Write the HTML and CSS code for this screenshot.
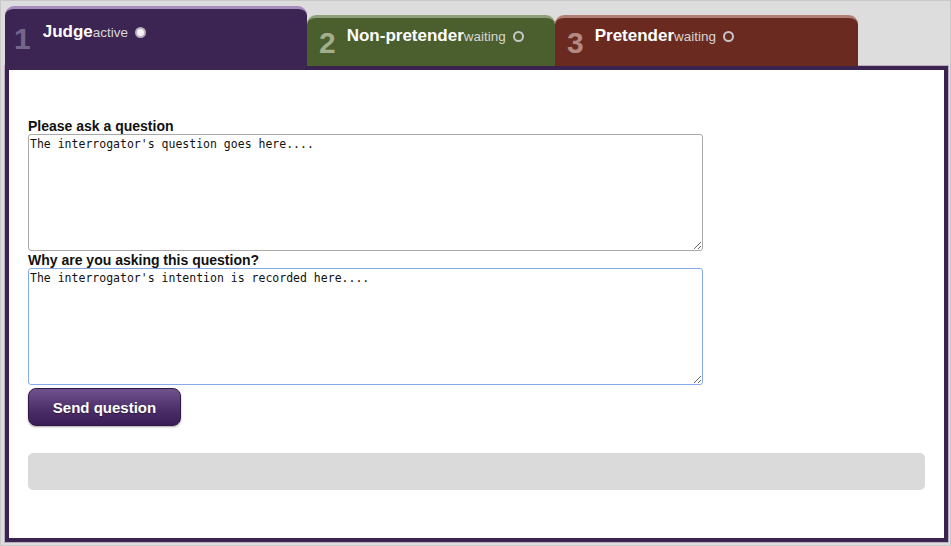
FILE: index.html
```html
<!DOCTYPE html>
<html>
<head>
<meta charset="utf-8">
<link rel="stylesheet" href="styles.css">
</head>
<body>
<div class="page">
  <div class="tabs">
    <div class="tab tab-judge">
      <span class="num">1</span>
      <span class="title"><b>Judge</b>active<i class="dot on"></i></span>
    </div>
    <div class="tab tab-non">
      <span class="num">2</span>
      <span class="title"><b>Non-pretender</b>waiting<i class="dot"></i></span>
    </div>
    <div class="tab tab-pre">
      <span class="num">3</span>
      <span class="title"><b>Pretender</b>waiting<i class="dot"></i></span>
    </div>
  </div>
  <div class="panel">
    <label class="lbl">Please ask a question</label>
    <textarea class="box">The interrogator's question goes here....</textarea>
    <label class="lbl">Why are you asking this question?</label>
    <textarea class="box focused">The interrogator's intention is recorded here....</textarea>
    <button class="send">Send question</button>
    <div class="status"></div>
  </div>
</div>
</body>
</html>
```

FILE: styles.css
```css
html, body {
  margin: 0;
  padding: 0;
  background: #dddddd;
}
.page {
  box-sizing: border-box;
  width: 951px;
  height: 546px;
  border: 1px solid #c9c9c9;
  padding: 5px 0 0 4px;
  font-family: "Liberation Sans", Arial, sans-serif;
}
.tabs {
  display: flex;
  align-items: flex-end;
  height: 60px;
  position: relative;
  z-index: 2;
}
.tab {
  box-sizing: border-box;
  display: flex;
  align-items: flex-start;
  border-radius: 9px 9px 0 0;
  border-top: 3px solid;
  color: #fff;
}
.tab-judge {
  width: 302px;
  height: 64px;
  margin-bottom: -4px;
  background: #3c2552;
  border-top-color: #a58cbd;
  padding: 13px 0 0 9px;
}
.tab-non {
  width: 248px;
  height: 51px;
  background: #4a5e2e;
  border-top-color: #8e9f7b;
  padding: 8px 0 0 12px;
}
.tab-pre {
  width: 303px;
  height: 51px;
  background: #6a2a20;
  border-top-color: #b27f77;
  padding: 8px 0 0 12px;
}
.num {
  font-size: 30px;
  font-weight: bold;
  line-height: 30px;
  margin-top: 2px;
  margin-right: 11px;
}
.tab-judge .num { color: #75658a; margin-right: 12px; }
.tab-non .num { color: #a4ae8d; }
.tab-pre .num { color: #b38a83; }
.title {
  font-size: 13.5px;
  line-height: 20px;
  color: #d6d6d6;
  white-space: nowrap;
}
.title b {
  font-size: 17px;
  color: #ffffff;
}
.dot {
  display: inline-block;
  box-sizing: border-box;
  width: 11px;
  height: 11px;
  border-radius: 50%;
  border: 2px solid #c6c6c6;
  margin-left: 7px;
  vertical-align: -1px;
}
.dot.on {
  background: #f4f4f4;
  border-color: #b9b2c0;
}
.panel {
  position: relative;
  z-index: 1;
  box-sizing: border-box;
  width: 943px;
  height: 476px;
  background: #fff;
  border: 4px solid #3b2350;
  box-shadow: 0 0 0 1px #b8adc3;
  padding: 47px 0 0 19px;
}
.lbl {
  display: block;
  font-size: 14px;
  font-weight: bold;
  line-height: 15px;
  padding-top: 2px;
  color: #111;
}
.box {
  display: block;
  box-sizing: border-box;
  width: 675px;
  height: 117px;
  margin: 0;
  padding: 2px 1px;
  border: 1px solid #a9a9a9;
  border-radius: 3px;
  font-family: "DejaVu Sans Mono", "Liberation Mono", monospace;
  font-size: 11.5px;
  color: #111;
  resize: both;
  outline: none;
}
.box.focused {
  border-color: #86a9ea;
}
.send {
  display: block;
  margin-top: 3px;
  width: 153px;
  height: 38px;
  border: 1px solid #2f1946;
  border-radius: 8px;
  background: linear-gradient(#70528f, #4d2f6a 55%, #3a1d56);
  box-shadow: 0 1px 2px rgba(0,0,0,0.35);
  color: #fff;
  font-family: "Liberation Sans", Arial, sans-serif;
  font-size: 15px;
  font-weight: bold;
  text-shadow: 0 1px 1px rgba(0,0,0,0.4);
  padding: 0;
}
.status {
  margin-top: 27px;
  width: 897px;
  height: 37px;
  background: #dadada;
  border-radius: 5px;
}
```
